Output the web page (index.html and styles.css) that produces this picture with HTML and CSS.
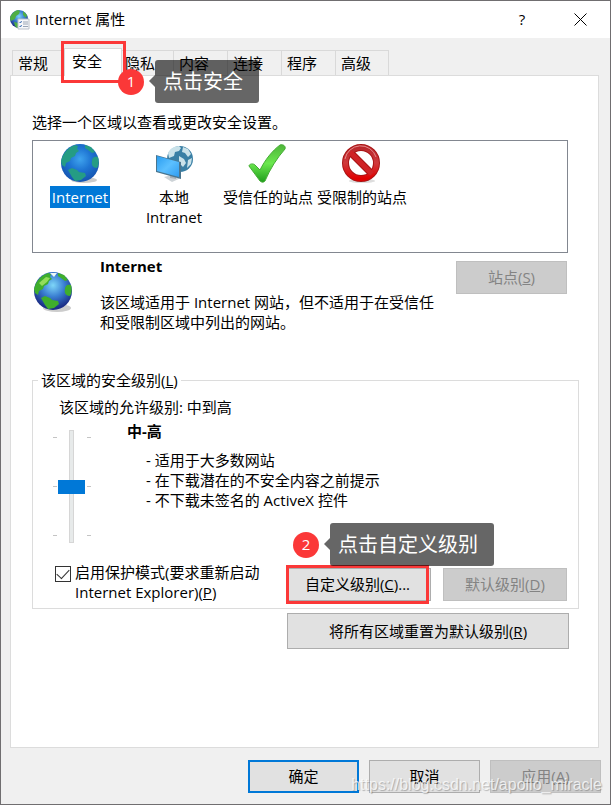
FILE: index.html
```html
<!DOCTYPE html>
<html lang="zh-CN">
<head>
  <meta charset="UTF-8">
  <title>Internet 属性</title>
  <link rel="stylesheet" href="styles.css">
</head>
<body>
  <svg class="defs" width="0" height="0" aria-hidden="true">
    <defs>
      <radialGradient id="sea" cx="0.5" cy="0.4" r="0.6">
        <stop offset="0" stop-color="#3fa4ee"/>
        <stop offset="0.5" stop-color="#1e74d2"/>
        <stop offset="1" stop-color="#1554b0"/>
      </radialGradient>
      <radialGradient id="deepsea" cx="0.5" cy="0.35" r="0.6">
        <stop offset="0" stop-color="#7ed6f8"/>
        <stop offset="0.5" stop-color="#3a7fd2"/>
        <stop offset="1" stop-color="#1c2f88"/>
      </radialGradient>
      <linearGradient id="screen" x1="0" y1="0" x2="1" y2="1">
        <stop offset="0" stop-color="#2a9df0"/>
        <stop offset="0.5" stop-color="#5cc0ff"/>
        <stop offset="1" stop-color="#2f9cf0"/>
      </linearGradient>
      <linearGradient id="tick" x1="0" y1="0" x2="0" y2="1">
        <stop offset="0" stop-color="#4fb53a"/>
        <stop offset="0.5" stop-color="#6be84e"/>
        <stop offset="1" stop-color="#1f9d1c"/>
      </linearGradient>
      <linearGradient id="ban" x1="0" y1="0" x2="0" y2="1">
        <stop offset="0" stop-color="#b9282c"/>
        <stop offset="0.5" stop-color="#cf3a3c"/>
        <stop offset="1" stop-color="#e00000"/>
      </linearGradient>
      <g id="land">
        <path d="M2 14C4 8 9 3 15 1l3 1-1 3 2 2-3 2-1 3-4 2-1 3-4 2-1 4-3-2-1-4z"/>
        <path d="M25 1l6 2 4 5-3 1-4-3-3-2zM38 13c-4-1-6 1-6 4-1 4 1 7 5 7 2-3 2-7 1-11z"/>
        <path d="M8 26l4-2 5 2 2 2 6 1 1 3-5 4-6 1-3-4z"/>
      </g>
    </defs>
  </svg>

  <div class="dialog">
    <header class="titlebar">
      <svg class="title-icon" viewBox="0 0 20 20">
        <circle cx="9" cy="9" r="9" fill="url(#deepsea)"/>
        <path d="M0 9c0-4 4-8 8-9l2 1-1 3-3 2-1 3-4 2zM13 1l4 4-1 3-3-3zM4 12l4 1 2 3-3 2-2-2z" fill="#4fae45"/>
        <path d="M8 9h11v10H8z" fill="#f6f7fa" stroke="#b9bfc9" stroke-width="1"/>
        <path d="M9.500 12l1 1 1-2M9.500 16l1 1 1-2" fill="none" stroke="#3b6fb5"/>
        <path d="M13 12h5M13 14h5M13 16.500h5" stroke="#9aa5b5"/>
      </svg>
      <h1>Internet 属性</h1>
      <button class="win-btn" type="button" aria-label="帮助">?</button>
      <button class="win-btn" type="button" aria-label="关闭">
        <svg width="13" height="13" viewBox="0 0 13 13"><path d="M.5.5l12 12M12.500.5l-12 12" stroke="#000" fill="none"/></svg>
      </button>
    </header>

    <nav class="tabs">
      <button class="tab" type="button">常规</button>
      <button class="tab active" type="button">安全</button>
      <button class="tab" type="button">隐私</button>
      <button class="tab" type="button">内容</button>
      <button class="tab" type="button">连接</button>
      <button class="tab" type="button">程序</button>
      <button class="tab" type="button">高级</button>
      <div class="mark mark-tab"></div>
      <div class="note note-tab"><span class="num">1</span><span class="tip">点击安全</span></div>
    </nav>

    <main class="panel">
      <p class="hint">选择一个区域以查看或更改安全设置。</p>

      <div class="zones">
        <button class="zone selected" type="button">
          <svg class="zone-icon" viewBox="0 0 40 40">
            <ellipse cx="24" cy="36" rx="13" ry="3" fill="#ccc"/>
            <circle cx="20" cy="19" r="19" fill="url(#sea)"/>
            <use href="#land" fill="#259c84"/>
          </svg>
          <span>Internet</span>
        </button>
        <button class="zone" type="button">
          <svg class="zone-icon" viewBox="0 0 40 40">
            <circle cx="26" cy="15" r="13" fill="#397fa5"/>
            <path d="M14 9c2-4 6-7 11-7l2 2-2 3-4 1-1 4-5 2zM29 3l5 2 3 5-3 3-3-4-3-1zM34 16l4-2-1 6-4 4zM25 12l5 3 2 4-3 4-4-4z" fill="#c9e2ea"/>
            <path d="M10 33l8-2 9 3-9 4z" fill="#cdd3d7"/>
            <path d="M16 29l6 2v4l-6-1z" fill="#a7afb5"/>
            <path d="M2 11l25 7v17L2 28z" fill="#49758f"/>
            <path d="M3 12l22 6v15L3 27z" fill="url(#screen)"/>
          </svg>
          <span>本地 Intranet</span>
        </button>
        <button class="zone" type="button">
          <svg class="zone-icon" viewBox="0 0 40 40">
            <path d="M1 22c0-2 4-3 6-1l5 5C17 16 24 7 32 1c3-1 6 1 5 4-8 9-15 20-20 32-2 2-4 1-5 0z" fill="url(#tick)" stroke="#45ab35"/>
          </svg>
          <span>受信任的站点</span>
        </button>
        <button class="zone" type="button">
          <svg class="zone-icon" viewBox="0 0 40 40">
            <ellipse cx="20" cy="37" rx="13" ry="2" fill="#ddd"/>
            <circle cx="19" cy="19" r="15.500" fill="none" stroke="#a81414" stroke-width="7"/>
            <path d="M8 8l22 22" stroke="#a81414" stroke-width="7"/>
            <circle cx="19" cy="19" r="15.500" fill="none" stroke="url(#ban)" stroke-width="5"/>
            <path d="M8 8l22 22" stroke="#cf2326" stroke-width="5"/>
            <path d="M3 15A16 16 0 0 1 34 13" fill="none" stroke="#e58a8a" stroke-width="1"/>
          </svg>
          <span>受限制的站点</span>
        </button>
      </div>

      <section class="detail">
        <svg class="detail-icon" viewBox="0 0 40 40">
          <ellipse cx="24" cy="36" rx="14" ry="4" fill="#ccc"/>
          <circle cx="20" cy="19" r="19" fill="url(#deepsea)"/>
          <use href="#land" fill="#3fae2c"/>
          <path d="M6 11l7-6 4 1-3 4-5 4z" fill="#93dd5a"/>
          <path d="M17 1h7l-3 4z" fill="#eef8f8"/>
        </svg>
        <div class="detail-text">
          <h2>Internet</h2>
          <p>该区域适用于 Internet 网站，但不适用于在受信任和受限制区域中列出的网站。</p>
        </div>
        <button class="btn" type="button" disabled>站点(<u>S</u>)</button>
      </section>

      <fieldset class="level">
        <legend>该区域的安全级别(<u>L</u>)</legend>
        <label class="allowed" for="level">该区域的允许级别: 中到高</label>
        <div class="level-body">
          <div class="slider">
            <div class="ticks"><i></i><i></i><i></i></div>
            <input type="range" id="level" min="0" max="2" value="1">
            <div class="ticks"><i></i><i></i><i></i></div>
          </div>
          <div class="level-info">
            <h3>中-高</h3>
            <ul>
              <li>- 适用于大多数网站</li>
              <li>- 在下载潜在的不安全内容之前提示</li>
              <li>- 不下载未签名的 ActiveX 控件</li>
            </ul>
          </div>
        </div>
        <div class="level-actions">
          <input type="checkbox" id="protect" checked>
          <label for="protect">启用保护模式(要求重新启动 Internet Explorer)(<u>P</u>)</label>
          <div class="custom">
            <button class="btn" type="button">自定义级别(<u>C</u>)...</button>
            <div class="mark mark-custom"></div>
            <div class="note note-custom"><span class="num">2</span><span class="tip">点击自定义级别</span></div>
          </div>
          <button class="btn btn-default" type="button" disabled>默认级别(<u>D</u>)</button>
        </div>
      </fieldset>

      <button class="btn btn-reset" type="button">将所有区域重置为默认级别(<u>R</u>)</button>
    </main>

    <footer class="footer">
      <button class="btn btn-ok" type="button">确定</button>
      <button class="btn" type="button">取消</button>
      <button class="btn" type="button" disabled>应用(<u>A</u>)</button>
      <span class="watermark">https://blog.csdn.net/apollo_miracle</span>
    </footer>
  </div>
</body>
</html>
```
FILE: styles.css
```css
* {
  box-sizing: border-box;
}
body {
  margin: 0;
  font-family: "Open Sans", "Noto Sans CJK SC", sans-serif;
  font-size: 15px;
  line-height: 20px;
  color: #000;
}
h1, h2, h3, p, ul {
  margin: 0;
  padding: 0;
  font-size: 15px;
}
button {
  font: inherit;
  color: inherit;
  padding: 0;
}
.defs {
  position: absolute;
}
.dialog {
  display: flex;
  flex-direction: column;
  min-height: 100vh;
  background: #f0f0f0;
  border: 1px solid #706e70;
}

/* title bar */
.titlebar {
  display: flex;
  align-items: center;
  height: 37px;
  padding: 0 1px 0 9px;
  background: #fff;
}
.title-icon {
  width: 20px;
  height: 20px;
}
.titlebar h1 {
  flex: 1;
  margin-left: 5px;
  padding-bottom: 1px;
  font-weight: 400;
}
.win-btn {
  display: flex;
  align-items: center;
  justify-content: center;
  width: 58px;
  height: 37px;
  padding-bottom: 1px;
  border: none;
  background: none;
}

/* tabs */
.tabs {
  position: relative;
  display: flex;
  align-items: flex-end;
  height: 37px;
  padding-left: 11px;
}
.tab {
  width: 54px;
  height: 25px;
  padding-left: 5px;
  text-align: left;
  background: #f0f0f0;
  border: 1px solid #d9d9d9;
  border-right: none;
  border-bottom: none;
}
.tab:nth-child(7) {
  border-right: 1px solid #d9d9d9;
}
.tab.active {
  z-index: 1;
  width: 58px;
  height: 28px;
  margin: 0 -3px -1px -2px;
  padding: 0 0 3px 7px;
  background: #fff;
  border-right: 1px solid #d9d9d9;
}

/* red frames and callouts */
.mark {
  position: absolute;
  border: 3px solid #fb3838;
  pointer-events: none;
}
.mark-tab {
  left: 60px;
  top: 3px;
  width: 65px;
  height: 42px;
  z-index: 2;
}
.mark-custom {
  inset: -3px 2px -3px -1px;
}
.note {
  position: absolute;
  z-index: 3;
  display: flex;
  align-items: center;
  gap: 11px;
  white-space: nowrap;
}
.note-tab {
  left: 117px;
  top: 22px;
}
.note-custom {
  left: 6px;
  bottom: 35px;
}
.num {
  width: 26px;
  height: 26px;
  border-radius: 50%;
  background: #fb3838;
  color: #fff;
  line-height: 24px;
  text-align: center;
}
.tip {
  position: relative;
  height: 43px;
  padding: 0 16px 0 8px;
  border-radius: 3px;
  background: rgba(0, 0, 0, 0.6);
  color: #fff;
  font-size: 20px;
  line-height: 44px;
}
.tip::before {
  content: "";
  position: absolute;
  left: -6px;
  top: 15px;
  border: 6px solid transparent;
  border-left: none;
  border-right-color: rgba(0, 0, 0, 0.6);
}

/* page */
.panel {
  flex: 1;
  display: flex;
  flex-direction: column;
  margin: 0 11px 12px 9px;
  padding: 36px 30px 20px 21px;
  background: #fff;
  border: 1px solid #dcdcdc;
}
.zones {
  display: flex;
  align-items: flex-start;
  min-height: 113px;
  margin-top: 8px;
  padding: 3px 0;
  border: 1px solid #828790;
}
.zone {
  display: flex;
  flex-direction: column;
  align-items: center;
  width: 94px;
  border: none;
  background: none;
}
.zone span {
  margin-top: 2px;
  padding: 1px 2px;
}
.zone.selected span {
  background: #0078d7;
  color: #fff;
}
.zone-icon {
  width: 40px;
  height: 40px;
}
.detail {
  display: flex;
  align-items: flex-start;
  margin-top: 3px;
}
.detail-icon {
  width: 40px;
  height: 40px;
  margin: 16px 0 0 1px;
}
.detail-text {
  flex: 1;
  margin: 0 14px 0 27px;
}
.detail-text p {
  margin-top: 16px;
}
.detail .btn {
  margin: 5px 1px 0 0;
}

/* buttons */
.btn {
  width: 111px;
  height: 33px;
  padding-bottom: 1px;
  background: #e1e1e1;
  border: 1px solid #adadad;
}
.btn:disabled {
  background: #ccc;
  border-color: #bfbfbf;
  color: #838383;
}
.btn-ok {
  border: 2px solid #0078d7;
}
.btn-default {
  width: 124px;
}
.btn-reset {
  align-self: flex-end;
  width: 282px;
  height: 36px;
  margin: 4px -1px 0 0;
}

/* security level */
.level {
  min-width: 0;
  margin: 38px -11px 0 0;
  padding: 7px 11px 6px 20px;
  border: 1px solid #dcdcdc;
}
.level legend {
  margin-left: -15px;
  padding: 0 3px;
}
.allowed {
  display: block;
  margin-left: 6px;
}
.level-body {
  display: flex;
  margin-top: 4px;
}
.slider {
  display: flex;
  height: 113px;
  margin-top: 9px;
}
.ticks {
  display: flex;
  flex-direction: column;
  justify-content: space-between;
  padding: 7px 0;
}
.ticks i {
  width: 4px;
  height: 1px;
  background: #c4c4c4;
}
.slider input {
  appearance: none;
  writing-mode: vertical-lr;
  direction: rtl;
  width: 29px;
  height: 113px;
  margin: 0 1px 0 0;
  background: linear-gradient(#e7eaea, #e7eaea) center / 3px 111px no-repeat,
    linear-gradient(#d6d6d6, #d6d6d6) center / 5px 113px no-repeat;
}
.slider input::-webkit-slider-thumb {
  appearance: none;
  width: 27px;
  height: 14px;
  background: #0078d7;
}
.level-info {
  margin-left: 36px;
}
.level-info ul {
  margin: 9px 0 0 19px;
  list-style: none;
}
.level-actions {
  display: flex;
  align-items: flex-start;
  margin-top: 19px;
}
.level-actions input {
  appearance: none;
  flex: none;
  width: 16px;
  height: 16px;
  margin: 4px 4px 0 2px;
  border: 1px solid #333;
  background: #fff;
}
.level-actions input:checked::before {
  content: "";
  display: block;
  width: 11px;
  height: 6px;
  margin: 2px 0 0 1px;
  border: solid #333;
  border-width: 0 0 1px 1px;
  transform: rotate(-47deg);
}
.level-actions label {
  flex: 1;
  padding-right: 20px;
}
.custom {
  position: relative;
  margin: 6px 12px 0 0;
}
.custom .btn {
  width: 144px;
  padding-right: 3px;
}
.level-actions .btn-default {
  margin-top: 6px;
}

/* footer */
.footer {
  position: relative;
  display: flex;
  justify-content: flex-end;
  gap: 10px;
  padding: 0 9px 11px;
}
.watermark {
  position: absolute;
  right: 8px;
  bottom: 9px;
  font-family: "Liberation Sans", Arial, sans-serif;
  font-size: 16px;
  color: rgba(255, 255, 255, 0.75);
  text-shadow: 1px 1px 1px rgba(0, 0, 0, 0.25);
}
```
